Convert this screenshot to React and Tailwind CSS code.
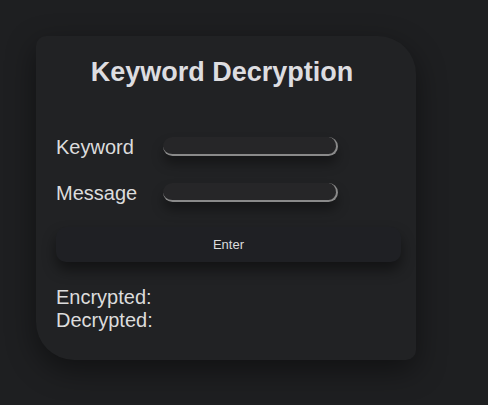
const Field = ({ label }) => (
    <div className="flex items-center h-[19px]">
        <label className="w-[107px] text-[20px] leading-none text-[#dcdcdc]">
            {label}
        </label>
        <input
            type="text"
            className="w-[175px] h-[19px] bg-[#262628] rounded-[10px] border-b-2 border-r-2 border-[#8a8a8a] outline-none shadow-[0_8px_12px_rgba(0,0,0,0.35)]"
        />
    </div>
);

const App = () => {
    return (
        <div
            className="w-[488px] h-[405px] bg-[#1e1f21] pt-[36px] pl-[36px]"
            style={{ fontFamily: '"Liberation Sans", Arial, sans-serif' }}
        >
            <div className="w-[380px] h-[324px] bg-[#212224] rounded-[10px_38px_10px_38px] shadow-[0_10px_30px_rgba(0,0,0,0.45)] px-[20px] pt-[21px]">
                <h1 className="text-center text-[27px] font-bold leading-[31px] text-[#dddde0] pr-[8px]">
                    Keyword Decryption
                </h1>
                <div className="mt-[49px] flex flex-col gap-[27px]">
                    <Field label="Keyword" />
                    <Field label="Message" />
                </div>
                <button className="mt-[25px] w-[345px] h-[35px] rounded-[10px] bg-[#1f2024] text-[13px] text-[#dcdcdc] shadow-[0_8px_14px_rgba(0,0,0,0.45)]">
                    Enter
                </button>
                <div className="mt-[24px] text-[20px] leading-[23px] text-[#dcdcdc]">
                    <p>Encrypted:</p>
                    <p>Decrypted:</p>
                </div>
            </div>
        </div>
    );
};

export default App;
